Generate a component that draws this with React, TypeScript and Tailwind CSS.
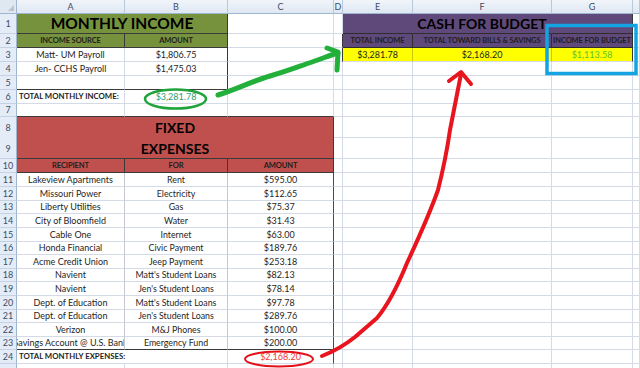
import clsx from "clsx";
import { twMerge } from "tailwind-merge";
import type { ReactNode } from "react";

const cn = (...a: clsx.ClassValue[]) => twMerge(clsx(a));

const FONT = "font-['Lato','Liberation_Sans',sans-serif]";

function Cell({ w, className, children }: { w: string; className?: string; children?: ReactNode }) {
  return (
    <div
      className={cn(
        "shrink-0 h-full flex items-center justify-center overflow-hidden whitespace-nowrap border-r border-b border-[#d4dbe6] text-[9px] text-[#1e1e1e]",
        w,
        className
      )}
    >
      {children}
    </div>
  );
}

function Row({ n, h, children }: { n: ReactNode; h: string; children: ReactNode }) {
  return (
    <div className={cn("flex shrink-0", h)}>
      <div className="w-[17px] shrink-0 h-full flex flex-col items-center justify-center bg-[#e4ecf7] border-r border-b border-r-[#9eb6ce] border-b-[#c5d2e3] text-[9px] text-[#3d4d66]">
        {n}
      </div>
      {children}
    </div>
  );
}

// right-hand blank columns D..H
function RightBlank() {
  return (
    <>
      <Cell w="w-[9px]" />
      <Cell w="w-[70px]" />
      <Cell w="w-[139px]" />
      <Cell w="w-[81px]" />
      <Cell w="w-[7px]" />
    </>
  );
}

const expenses = [
  ["Lakeview Apartments", "Rent", "$595.00", "h-[14px]"],
  ["Missouri Power", "Electricity", "$112.65", "h-[14px]"],
  ["Liberty Utilities", "Gas", "$75.37", "h-[13px]"],
  ["City of Bloomfield", "Water", "$31.43", "h-[14px]"],
  ["Cable One", "Internet", "$63.00", "h-[14px]"],
  ["Honda Financial", "Civic Payment", "$189.76", "h-[13px]"],
  ["Acme Credit Union", "Jeep Payment", "$253.18", "h-[14px]"],
  ["Navient", "Matt's Student Loans", "$82.13", "h-[13px]"],
  ["Navient", "Jen's Student Loans", "$78.14", "h-[14px]"],
  ["Dept. of Education", "Matt's Student Loans", "$97.78", "h-[14px]"],
  ["Dept. of Education", "Jen's Student Loans", "$289.76", "h-[13px]"],
  ["Verizon", "M&J Phones", "$100.00", "h-[14px]"],
  ["Savings Account @ U.S. Bank", "Emergency Fund", "$200.00", "h-[13px]"],
];

const cols = [
  ["A", "w-[108px]"],
  ["B", "w-[103px]"],
  ["C", "w-[106px]"],
  ["D", "w-[9px]"],
  ["E", "w-[70px]"],
  ["F", "w-[139px]"],
  ["G", "w-[81px]"],
  ["", "w-[7px]"],
];

const head = "text-[7.5px] font-bold tracking-[-0.1px]";

export default function App() {
  return (
    <div className={cn("relative w-[640px] h-[368px] overflow-hidden bg-white flex flex-col", FONT)}>
      {/* column headers */}
      <div className="flex h-[14px] shrink-0">
        <div className="relative w-[17px] shrink-0 bg-[#dfe7f1] border-r border-b border-[#9eb6ce]">
          <div className="absolute right-[2px] bottom-[2px] w-0 h-0 border-l-[6px] border-l-transparent border-b-[6px] border-b-[#b5c3d4]" />
        </div>
        {cols.map(([l, w]) => (
          <div
            key={w}
            className={cn(
              "shrink-0 h-full flex items-center justify-center bg-gradient-to-b from-[#f1f5fa] to-[#dfe7f2] border-r border-b border-r-[#b9c8da] border-b-[#9eb6ce] text-[9px] text-[#3d4d66]",
              w
            )}
          >
            {l}
          </div>
        ))}
      </div>

      {/* 1 */}
      <Row n="1" h="h-[20px]">
        <Cell w="w-[211px]" className="bg-[#76923c] border-b-[#3a3a3a] border-r-[#3a3a3a] text-[15.5px] font-bold text-black">
          MONTHLY INCOME
        </Cell>
        <Cell w="w-[106px]" />
        <Cell w="w-[9px]" />
        <Cell w="w-[70px]" className="bg-[#5f497a] border-b-[#2e2e2e] border-r-[#5f497a]" />
        <Cell w="w-[139px]" className="bg-[#5f497a] border-b-[#2e2e2e] border-r-[#5f497a] text-[14px] font-bold text-black">
          CASH FOR BUDGET
        </Cell>
        <Cell w="w-[81px]" className="bg-[#5f497a] border-b-[#2e2e2e] border-r-[#3a3a3a]" />
        <Cell w="w-[7px]" />
      </Row>

      {/* 2 */}
      <Row n="2" h="h-[14px]">
        <Cell w="w-[108px]" className={cn("bg-[#76923c] border-b-[#3a3a3a] border-r-[#3a3a3a]", head)}>
          INCOME SOURCE
        </Cell>
        <Cell w="w-[103px]" className={cn("bg-[#76923c] border-b-[#3a3a3a] border-r-[#3a3a3a]", head)}>
          AMOUNT
        </Cell>
        <Cell w="w-[106px]" />
        <Cell w="w-[9px]" className="border-r-[#3a3a3a]" />
        <Cell w="w-[70px]" className={cn("bg-[#5f497a] border-b-[#2e2e2e] border-r-[#2e2e2e]", head)}>
          TOTAL INCOME
        </Cell>
        <Cell w="w-[139px]" className={cn("bg-[#5f497a] border-b-[#2e2e2e] border-r-[#2e2e2e]", head)}>
          TOTAL TOWARD BILLS &amp; SAVINGS
        </Cell>
        <Cell w="w-[81px]" className={cn("bg-[#5f497a] border-b-[#2e2e2e] border-r-[#2e2e2e] tracking-[-0.2px]", head)}>
          INCOME FOR BUDGET
        </Cell>
        <Cell w="w-[7px]" />
      </Row>

      {/* 3 */}
      <Row n="3" h="h-[14px]">
        <Cell w="w-[108px]">Matt- UM Payroll</Cell>
        <Cell w="w-[103px]" className="border-r-[#3a3a3a]">$1,806.75</Cell>
        <Cell w="w-[106px]" />
        <Cell w="w-[9px]" className="border-r-[#3a3a3a]" />
        <Cell w="w-[70px]" className="bg-[#ffff00] border-r-[#c9c900]">$3,281.78</Cell>
        <Cell w="w-[139px]" className="bg-[#ffff00] border-r-[#c9c900]">$2,168.20</Cell>
        <Cell w="w-[81px]" className="bg-[#ffff00] border-r-[#3a3a3a] text-[#59c42e]">$1,113.58</Cell>
        <Cell w="w-[7px]" />
      </Row>

      {/* 4 */}
      <Row n="4" h="h-[14px]">
        <Cell w="w-[108px]">Jen- CCHS Payroll</Cell>
        <Cell w="w-[103px]" className="border-r-[#3a3a3a]">$1,475.03</Cell>
        <Cell w="w-[106px]" />
        <RightBlank />
      </Row>

      {/* 5 */}
      <Row n="5" h="h-[14px]">
        <Cell w="w-[108px]" className="border-b-[#3a3a3a]" />
        <Cell w="w-[103px]" className="border-b-[#3a3a3a] border-r-[#3a3a3a]" />
        <Cell w="w-[106px]" />
        <RightBlank />
      </Row>

      {/* 6 */}
      <Row n="6" h="h-[14px]">
        <Cell w="w-[108px]" className="justify-start pl-[2px] text-[7.8px] font-bold">
          TOTAL MONTHLY INCOME:
        </Cell>
        <Cell w="w-[103px]" className="text-[#2f9e6a]">$3,281.78</Cell>
        <Cell w="w-[106px]" />
        <RightBlank />
      </Row>

      {/* 7 */}
      <Row n="7" h="h-[13px]">
        <Cell w="w-[108px]" className="border-b-[#3a3a3a]" />
        <Cell w="w-[103px]" className="border-b-[#3a3a3a]" />
        <Cell w="w-[106px]" className="border-b-[#3a3a3a]" />
        <RightBlank />
      </Row>

      {/* 8-9 merged */}
      <Row
        n={
          <>
            <span className="h-[21px] leading-[21px]">8</span>
            <span className="h-[21px] leading-[21px]">9</span>
          </>
        }
        h="h-[42px]"
      >
        <Cell
          w="w-[317px]"
          className="flex-col bg-[#c0504d] border-b-[#3a3a3a] border-r-[#3a3a3a] text-[14px] font-bold leading-[21px] text-black pt-[1px]"
        >
          <span>FIXED</span>
          <span>EXPENSES</span>
        </Cell>
        <div className="flex flex-col">
          <div className="flex h-[21px]">
            <RightBlank />
          </div>
          <div className="flex h-[21px]">
            <RightBlank />
          </div>
        </div>
      </Row>

      {/* 10 */}
      <Row n="10" h="h-[14px]">
        <Cell w="w-[108px]" className={cn("bg-[#c0504d] border-b-[#3a3a3a] border-r-[#3a3a3a]", head)}>
          RECIPIENT
        </Cell>
        <Cell w="w-[103px]" className={cn("bg-[#c0504d] border-b-[#3a3a3a] border-r-[#3a3a3a]", head)}>
          FOR
        </Cell>
        <Cell w="w-[106px]" className={cn("bg-[#c0504d] border-b-[#3a3a3a] border-r-[#3a3a3a]", head)}>
          AMOUNT
        </Cell>
        <RightBlank />
      </Row>

      {expenses.map(([who, what, amt, h], i) => (
        <Row key={i} n={String(11 + i)} h={h}>
          <Cell w="w-[108px]" className={cn("border-r-[#c4c8cf]", i === 12 && "border-b-[#3a3a3a]")}>
            {who}
          </Cell>
          <Cell w="w-[103px]" className={cn("border-r-[#c4c8cf] text-[8.8px]", i === 12 && "border-b-[#3a3a3a]")}>
            {what}
          </Cell>
          <Cell w="w-[106px]" className={cn("border-r-[#4a4a4a]", i === 12 && "border-b-[#3a3a3a]")}>
            {amt}
          </Cell>
          <RightBlank />
        </Row>
      ))}

      {/* 24 */}
      <Row n="24" h="h-[14px]">
        <Cell w="w-[211px]" className="justify-start pl-[2px] text-[7.8px] font-bold">
          TOTAL MONTHLY EXPENSES:
        </Cell>
        <Cell w="w-[106px]" className="border-r-[#4a4a4a] text-[#f03a3a]">$2,168.20</Cell>
        <RightBlank />
      </Row>

      {/* 25 (only a sliver shows) */}
      <Row n="" h="h-[14px]">
        <Cell w="w-[108px]" />
        <Cell w="w-[103px]" />
        <Cell w="w-[106px]" />
        <RightBlank />
      </Row>

      {/* hand-drawn annotations */}
      <svg className="absolute inset-0 pointer-events-none" width="640" height="368" viewBox="0 0 640 368" fill="none">
        <ellipse cx="175.5" cy="99" rx="30.5" ry="9.5" stroke="#1fa33a" strokeWidth="2.5" />
        <ellipse cx="279" cy="359" rx="34" ry="7.5" stroke="#e3101a" strokeWidth="2" />
        <path
          d="M218 95 C 235 90 250 82 270 76 S 300 66 312 62 S 330 55 338 53"
          stroke="#22b03a"
          strokeWidth="5"
          strokeLinecap="round"
          strokeLinejoin="round"
        />
        <path d="M327 48 L338 52 L337 70" stroke="#22b03a" strokeWidth="5" strokeLinecap="round" strokeLinejoin="round" />
        <path
          d="M322 356 Q 340 349 355 337 L 377 318 Q 392 300 407 263 Q 428 218 438 190 Q 446 158 450 130 L 461 74"
          stroke="#e8141e"
          strokeWidth="4"
          strokeLinecap="round"
          strokeLinejoin="round"
        />
        <path d="M449 81 L461 72 L471 84" stroke="#e8141e" strokeWidth="4" strokeLinecap="round" strokeLinejoin="round" />
        <rect x="547" y="25.5" width="89" height="48" stroke="#13a5e2" strokeWidth="3.5" />
      </svg>
    </div>
  );
}
